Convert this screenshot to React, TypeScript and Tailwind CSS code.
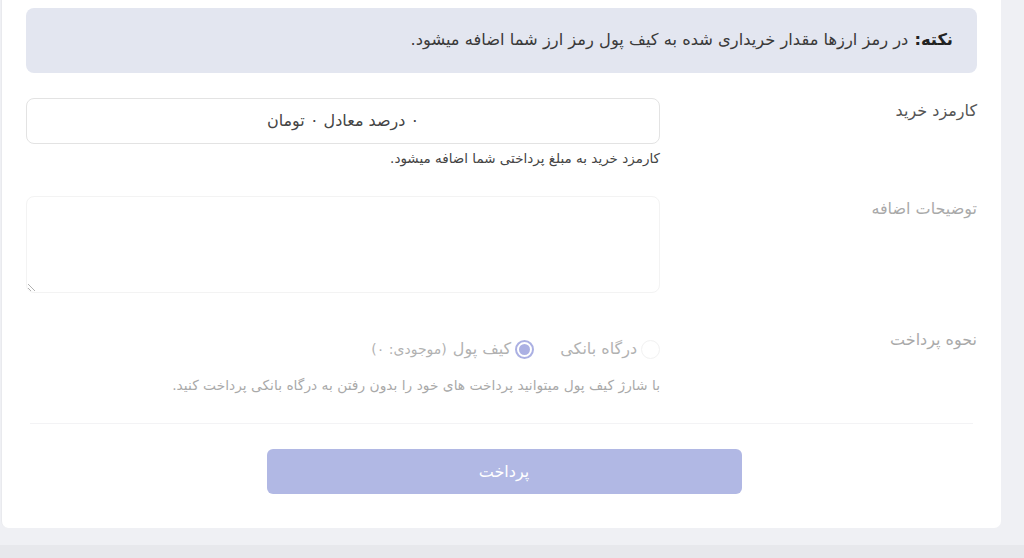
import React from "react";

const font = { fontFamily: '"DejaVu Sans", "Noto Sans", sans-serif' };

export default function App() {
  return (
    <div className="w-[1024px] h-[558px] bg-[#eff0f4] overflow-hidden flex flex-col" style={font}>
      <div className="h-[545px] shrink-0">
        <div dir="rtl" className="ml-[1px] w-[1000px] h-[528px] bg-white rounded-b-[7px] border-l border-[#e9eaee] px-[24px] pt-[8px]">
          <div className="h-[65px] rounded-[8px] bg-[#e3e6f0] flex items-center pr-[24px] text-[16.3px] text-[#3a3a3a]">
            <span className="font-bold text-[#222]">نکته:</span>
            <span className="mr-[6px]">در رمز ارزها مقدار خریداری شده به کیف پول رمز ارز شما اضافه میشود.</span>
          </div>

          <div className="grid grid-cols-3 mt-[25px]">
            <div className="pt-[1px] text-[16px] text-[#555] leading-[24px]">کارمزد خرید</div>
            <div className="col-span-2">
              <div className="h-[46px] rounded-[8px] border border-[#e3e3e3] flex items-center justify-center text-[16px] text-[#444]">
                ۰ درصد معادل ۰ تومان
              </div>
              <div className="mt-[6px] text-[13.5px] text-[#444] leading-[16px]">کارمزد خرید به مبلغ پرداختی شما اضافه میشود.</div>
            </div>
          </div>

          <div className="grid grid-cols-3 mt-[30px] opacity-50">
            <div className="pt-[1px] text-[16px] text-[#555] leading-[24px]">توضیحات اضافه</div>
            <div className="col-span-2">
              <textarea className="block w-full h-[97px] rounded-[8px] border border-[#e8e8e8] bg-white outline-none" disabled />
            </div>
          </div>

          <div className="grid grid-cols-3 mt-[34px] opacity-50">
            <div className="pt-[1px] text-[16px] text-[#555] leading-[24px]">نحوه پرداخت</div>
            <div className="col-span-2">
              <div className="flex items-center h-[22px] mt-[11px] text-[16px] text-[#666]">
                <span className="w-[19px] h-[19px] rounded-full border border-[#e6e6e6] bg-white" />
                <span className="mr-[4px]">درگاه بانکی</span>
                <span className="mr-[26px] w-[19px] h-[19px] rounded-full border-2 border-[#5964c8] bg-white flex items-center justify-center">
                  <span className="w-[11px] h-[11px] rounded-full bg-[#5964c8]" />
                </span>
                <span className="mr-[4px]">کیف پول</span>
                <span className="mr-[6px] text-[14px]">(موجودی: ۰)</span>
              </div>
              <div className="mt-[16px] text-[13.8px] text-[#555] leading-[18px]">با شارژ کیف پول میتوانید پرداخت های خود را بدون رفتن به درگاه بانکی پرداخت کنید.</div>
            </div>
          </div>

          <div className="mt-[29px] h-px bg-[#f3f3f5] mx-[4px]" />

          <div className="flex justify-center mt-[25px] pl-[5px]">
            <button className="w-[475px] h-[45px] rounded-[6px] bg-[#b1b8e4] text-white text-[16px]" style={font}>پرداخت</button>
          </div>
        </div>
      </div>
      <div className="h-[13px] bg-[#e7e8ec]" />
    </div>
  );
}
